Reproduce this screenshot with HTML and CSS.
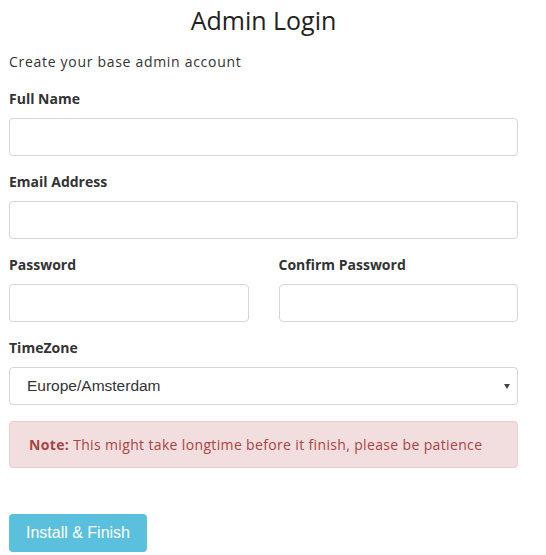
FILE: index.html
```html
<!DOCTYPE html>
<html>
<head>
<meta charset="utf-8">
<link rel="stylesheet" href="styles.css">
</head>
<body>
<div class="page">
  <h1 class="title">Admin Login</h1>
  <p class="intro">Create your base admin account</p>
  <div class="group">
    <label class="label">Full Name</label>
    <div class="input"></div>
  </div>
  <div class="group">
    <label class="label">Email Address</label>
    <div class="input"></div>
  </div>
  <div class="row">
    <div class="group">
      <label class="label">Password</label>
      <div class="input"></div>
    </div>
    <div class="group">
      <label class="label">Confirm Password</label>
      <div class="input"></div>
    </div>
  </div>
  <div class="group">
    <label class="label">TimeZone</label>
    <div class="input select">
      <span class="select-text">Europe/Amsterdam</span>
      <svg class="caret" width="6" height="5" viewBox="0 0 6 5"><path d="M0 0H6L3 5Z" fill="#444"/></svg>
    </div>
  </div>
  <div class="alert"><strong>Note:</strong> This might take longtime before it finish, please be patience</div>
  <button class="btn">Install &amp; Finish</button>
</div>
</body>
</html>
```
FILE: styles.css
```css
html, body {
  margin: 0;
  padding: 0;
  background: #fff;
}
.page {
  width: 509px;
  margin-left: 9px;
  font-family: "Open Sans", sans-serif;
  color: #333;
}
.title {
  margin: 0;
  height: 40px;
  line-height: 40px;
  font-size: 25px;
  font-weight: 400;
  text-align: center;
  color: #222;
}
.intro {
  margin: 12px 0 0;
  line-height: 20px;
  font-size: 14px;
  letter-spacing: 0.7px;
  color: #333;
}
.group {
  display: flex;
  flex-direction: column;
  margin-top: 17px;
}
.group + .group, .row + .group, .group + .row, .row {
  margin-top: 16px;
}
.row > .group { margin-top: 0; }
.label {
  display: block;
  line-height: 20px;
  height: 20px;
  font-size: 14px;
  font-weight: 700;
  margin-bottom: 9px;
  color: #333;
}
.input {
  height: 38px;
  box-sizing: border-box;
  border: 1px solid #d5d5d5;
  border-radius: 4px;
  background: #fff;
}
.row {
  display: grid;
  grid-template-columns: 1fr 1fr;
  column-gap: 30px;
}
.select {
  display: flex;
  align-items: center;
  justify-content: space-between;
  padding: 0 7px 0 17px;
}
.select-text {
  font-family: "Liberation Sans", Arial, sans-serif;
  font-size: 15.5px;
  color: #333;
}
.caret { display: block; }
.alert {
  margin-top: 16px;
  box-sizing: border-box;
  height: 47px;
  border: 1px solid #ebccd1;
  background: #f2dede;
  color: #a94442;
  border-radius: 4px;
  padding: 0 19px;
  font-size: 14px;
  letter-spacing: 0.35px;
  line-height: 45px;
}
.alert strong { font-weight: 700; }
.btn {
  display: block;
  margin-top: 46px;
  width: 138px;
  height: 38px;
  border: none;
  border-radius: 4px;
  background: #5bc0de;
  color: #fff;
  font-family: "Liberation Sans", Arial, sans-serif;
  font-size: 16px;
  padding: 0;
}
```
